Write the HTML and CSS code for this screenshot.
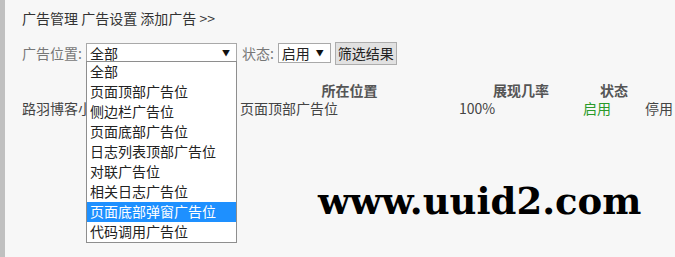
FILE: index.html
```html
<!DOCTYPE html>
<html lang="zh">
<head>
<meta charset="utf-8">
<link rel="stylesheet" href="styles.css">
</head>
<body>
<div class="page">
  <div class="strip"></div>
  <div class="main">
    <div class="crumb">广告管理 广告设置 添加广告 &gt;&gt;</div>
    <div class="filter">
      <span class="label">广告位置:</span>
      <div class="select wide">
        <span>全部</span><span class="arrow">▼</span>
        <ul class="options">
          <li>全部</li>
          <li>页面顶部广告位</li>
          <li>侧边栏广告位</li>
          <li>页面底部广告位</li>
          <li>日志列表顶部广告位</li>
          <li>对联广告位</li>
          <li>相关日志广告位</li>
          <li class="hl">页面底部弹窗广告位</li>
          <li>代码调用广告位</li>
        </ul>
      </div>
      <span class="label">状态:</span>
      <div class="select narrow"><span>启用</span><span class="arrow">▼</span></div>
      <button class="btn">筛选结果</button>
    </div>
    <table class="list">
      <colgroup><col class="c1"><col class="c2"><col class="c3"><col class="c4"><col class="c5"></colgroup>
      <thead>
        <tr><th></th><th>所在位置</th><th>展现几率</th><th>状态</th><th></th></tr>
      </thead>
      <tbody>
        <tr><td>路羽博客小工具</td><td>页面顶部广告位</td><td>100%</td><td class="on">启用</td><td>停用</td></tr>
      </tbody>
    </table>
  </div>
  <div class="mark">www.uuid2.com</div>
</div>
</body>
</html>
```
FILE: styles.css
```css
html, body { margin: 0; padding: 0; }
body {
  width: 675px; height: 257px; overflow: hidden;
  background: #f7f7f7;
  font-family: "Noto Sans CJK SC", "Liberation Sans", sans-serif;
  font-size: 14px; color: #333;
}
.page { position: relative; display: flex; height: 257px; }
.strip { width: 5px; background: #c0c0c0; flex: none; }
.main { padding-left: 17px; flex: 1; }
.crumb { margin-top: 8px; height: 20px; line-height: 20px; color: #333; }
.filter {
  margin-top: 13px; display: flex; align-items: center; height: 24px;
}
.label { color: #777; margin-right: 4px; line-height: 20px; }
.select {
  position: relative; box-sizing: border-box; height: 20px;
  border: 1px solid #a9a9a9; background: #fff;
  display: flex; align-items: center; justify-content: space-between;
  padding: 0 6px 0 3px; line-height: 18px; color: #222; margin-right: 5px;
}
.wide { width: 151px; }
.narrow { width: 53px; }
.arrow { font-size: 8px; color: #111; }
.options {
  position: absolute; left: -1px; top: 17px; width: 151px; box-sizing: border-box;
  margin: 0; padding: 0; list-style: none;
  border: 1px solid #8e8e8e; background: #fff; z-index: 2;
}
.options li { height: 20px; line-height: 19px; padding-left: 3px; color: #222; }
.options li.hl { background: #1e90ff; color: #fff; }
.btn {
  height: 23px; box-sizing: border-box; margin-left: -1px;
  border: 1px solid #adadad; background: #e1e1e1; color: #222;
  font-family: inherit; font-size: 14px; padding: 0 2px; line-height: 20px;
}
.list { border-collapse: collapse; table-layout: fixed; margin-top: 16px; width: 680px; }
.c1 { width: 218px; } .c2 { width: 219px; } .c3 { width: 124px; } .c4 { width: 62px; } .c5 { width: 57px; }
.list th { font-weight: bold; color: #555; text-align: center; height: 18px; line-height: 18px; padding: 0; }
.list td { color: #444; height: 18px; line-height: 18px; padding: 0; white-space: nowrap; overflow: hidden; }
.list td.on { color: #2a9a2a; }
.mark {
  position: absolute; left: 318px; top: 178px;
  font-family: "DejaVu Serif", serif; font-weight: bold; font-size: 37px;
  color: #000; letter-spacing: 0; line-height: 46px;
}
```
